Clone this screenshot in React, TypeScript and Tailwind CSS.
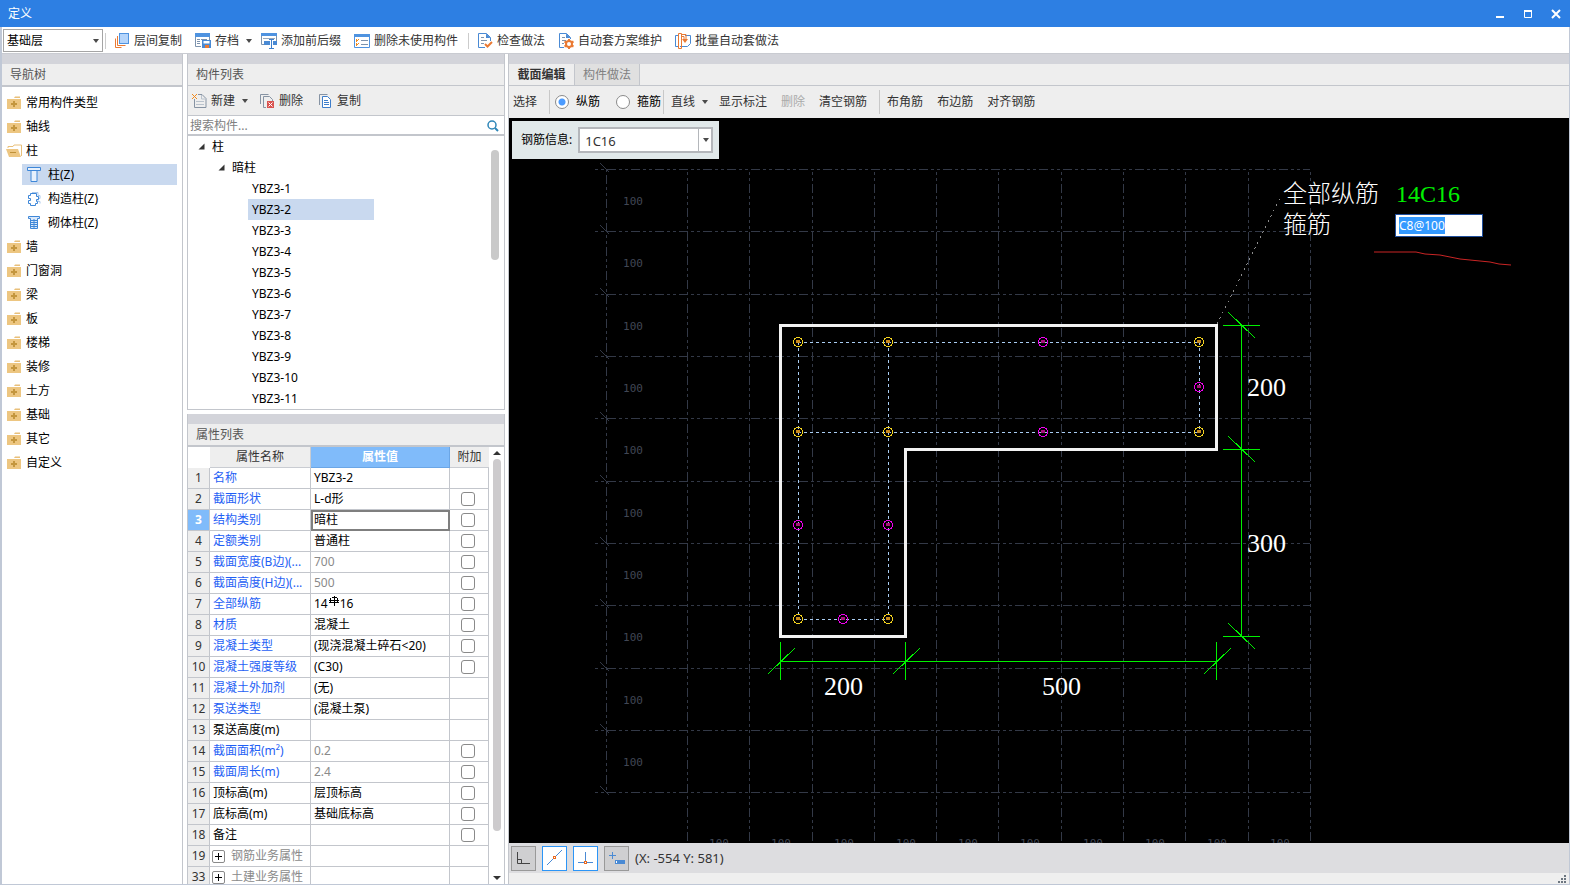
import { useEffect, useRef, useState } from "react";
import type { ReactNode } from "react";
import clsx from "clsx";

const GRID_X = [687, 749, 812, 874, 936, 998, 1061, 1123, 1185, 1248, 1310];
const GRID_Y = [169, 231, 294, 356, 418, 481, 543, 605, 668, 730, 792];

const CORNER_BARS = [
  [798, 342], [888, 342], [1199, 342],
  [798, 432], [888, 432], [1199, 432],
  [798, 619], [888, 619],
];
const SIDE_BARS = [
  [1043, 342], [1043, 432], [1199, 387],
  [798, 525], [888, 525], [843, 619],
];

interface PropertyRow {
  no: number;
  name: string;
  value?: string;
  check?: boolean;
  tone?: "blue" | "black";
  dim?: boolean;
  group?: boolean;
}

const PROPERTIES: PropertyRow[] = [
  { no: 1, name: "名称", value: "YBZ3-2", tone: "blue" },
  { no: 2, name: "截面形状", value: "L-d形", tone: "blue", check: true },
  { no: 3, name: "结构类别", value: "暗柱", tone: "blue", check: true },
  { no: 4, name: "定额类别", value: "普通柱", tone: "blue", check: true },
  { no: 5, name: "截面宽度(B边)(...", value: "700", tone: "blue", check: true, dim: true },
  { no: 6, name: "截面高度(H边)(...", value: "500", tone: "blue", check: true, dim: true },
  { no: 7, name: "全部纵筋", value: "14#16", tone: "blue", check: true },
  { no: 8, name: "材质", value: "混凝土", tone: "blue", check: true },
  { no: 9, name: "混凝土类型", value: "(现浇混凝土碎石<20)", tone: "blue", check: true },
  { no: 10, name: "混凝土强度等级", value: "(C30)", tone: "blue", check: true },
  { no: 11, name: "混凝土外加剂", value: "(无)", tone: "blue" },
  { no: 12, name: "泵送类型", value: "(混凝土泵)", tone: "blue" },
  { no: 13, name: "泵送高度(m)" },
  { no: 14, name: "截面面积(m²)", value: "0.2", tone: "blue", check: true, dim: true },
  { no: 15, name: "截面周长(m)", value: "2.4", tone: "blue", check: true, dim: true },
  { no: 16, name: "顶标高(m)", value: "层顶标高", check: true },
  { no: 17, name: "底标高(m)", value: "基础底标高", check: true },
  { no: 18, name: "备注", check: true },
  { no: 19, name: "钢筋业务属性", group: true },
  { no: 33, name: "土建业务属性", group: true },
];

const MEMBERS = Array.from({ length: 11 }, (_, i) => `YBZ3-${i + 1}`);

function Caret() {
  return (
    <svg width="6" height="4" viewBox="0 0 6 4" className="shrink-0" aria-hidden="true">
      <path d="M0 0h6L3 4z" fill="#4a4a4a" />
    </svg>
  );
}

function Icon({ children }: { children: ReactNode }) {
  return (
    <svg width="16" height="16" viewBox="0 0 16 16" fill="none" className="shrink-0" aria-hidden="true">
      {children}
    </svg>
  );
}

function LayerCopyIcon() {
  return (
    <Icon>
      <rect x="5.5" y="0.5" width="9" height="10" fill="#b5d5fb" stroke="#4f93e0" />
      <path d="M3.5 3v9.500h8M1.500 5.500v9h6" stroke="#ea7a33" />
    </Icon>
  );
}

function ArchiveIcon() {
  return (
    <Icon>
      <path d="M0 0h15v4H0z" fill="#4f93e0" />
      <path d="M0.500 4v9.500H6M14.500 4v3" stroke="#7d93ad" />
      <path d="M2 6.500h3M6 6.500h6M2 8.500h3M2 10.500h3" stroke="#7d93ad" />
      <path d="M7 7h9v8H7z" fill="#4a8ad4" />
      <path d="M8.500 8h6v2.500h-6z" fill="#fff" />
      <path d="M10 12h4v3h-4z" fill="#ea7a33" />
    </Icon>
  );
}

function AffixIcon() {
  return (
    <Icon>
      <path d="M0 0h16v3H0z" fill="#4f93e0" />
      <path d="M0.500 3v8.500h3M15.500 3v8.500h-2" stroke="#7d93ad" />
      <path d="M2 5.500h12" stroke="#9aa9ba" />
      <path d="M3 8h6v4H3zM12 8h4v4h-4z" fill="#4a8ad4" />
      <path d="M8 6.500h5M10.500 7v8M8 15.500h5" stroke="#3e7ecb" />
    </Icon>
  );
}

function UnusedIcon() {
  return (
    <Icon>
      <path d="M0 1h16v3H0z" fill="#4f93e0" />
      <path d="M0.500 4v10.500h15V4" stroke="#4f93e0" />
      <path d="M2 6h1v1h1v1H3v1H2zM4 6h1v1H4zM2 10h1v1h1v1H3v1H2zM4 10h1v1H4z" fill="#f08a1d" />
      <path d="M7 7.500h7M7 11.500h7" stroke="#7d93ad" />
    </Icon>
  );
}

function CheckDocIcon() {
  return (
    <Icon>
      <path d="M8 14.500H1.500V.5h8l4 4V8" stroke="#4a8ad4" />
      <path d="M9 .5v4.500h4.500z" fill="#4a8ad4" />
      <path d="M4 4.500h3M4 7.500h6M4 10.500h3" stroke="#7d93ad" />
      <path d="M8 11l2.500 2.500L15 9" stroke="#ea7a33" strokeWidth="2" />
    </Icon>
  );
}

function GearDocIcon() {
  return (
    <Icon>
      <path d="M6 14.500H1.500V.5h7l4 4V6" stroke="#4a8ad4" />
      <path d="M8 .5v4.500h4.500z" fill="#4a8ad4" />
      <path d="M4 4.500h3M4 7.500h4M4 10.500h2" stroke="#7d93ad" />
      <circle cx="11" cy="11" r="3" stroke="#ea7a33" strokeWidth="2" />
      <path d="M11 6v2M11 14v2M6.500 8.500l2 1M13.500 12.500l2 1M6.500 13.500l2-1M13.500 9.500l2-1" stroke="#ea7a33" strokeWidth="2" />
    </Icon>
  );
}

function BatchIcon() {
  return (
    <Icon>
      <path d="M3.500 2.500h-3v11h3M10 2.500h5.500v8l-3 3H5" stroke="#4a8ad4" />
      <path d="M3.500.5h3v15h-3zM6.500 1.500h4.500v5M6.500 3.500h2.500v3" stroke="#ea7a33" />
      <path d="M10 10L7 6h6z" fill="#ea7a33" />
    </Icon>
  );
}

function NewIcon() {
  return (
    <Icon>
      <path d="M7 1.500h4l4 4v9H3.500V6" stroke="#8693a3" />
      <path d="M10.500 2v4H15M5 8.500h8M5 11.500h8" stroke="#b9c2cc" />
      <path d="M1 1h1v1h1v1h1V2h1V1h1v1H5v1H4v1h1v1h1v1H5V5H4V4H3v1H2v1H1V5h1V4h1V3H2V2H1z" fill="#f08a1d" />
    </Icon>
  );
}

function DeleteIcon() {
  return (
    <Icon>
      <path d="M1.500 11V1.500h8M7 14.500H4.500V3.500h6l3 3V8" stroke="#8693a3" />
      <path d="M8 8h7v7H8z" fill="#d9534f" />
      <path d="M9.500 9.500l4 4M13.500 9.500l-4 4" stroke="#fff" />
    </Icon>
  );
}

function CopyIcon() {
  return (
    <Icon>
      <path d="M2.500 12V1.500h8" stroke="#8693a3" />
      <path d="M5.500 3.500h5l3 3v8h-8z" fill="#fff" stroke="#3e7ecb" />
      <path d="M7 7.500h4M7 9.500h5M7 11.500h5" stroke="#3e7ecb" />
    </Icon>
  );
}

function FolderIcon({ open = false }: { open?: boolean }) {
  return (
    <Icon>
      {open ? (
        <>
          <path d="M2 5V3.500h5l1-1.500h7.500V13" stroke="#e9c07a" />
          <path d="M0 6h12l3 8H3z" fill="#edc681" />
          <path d="M4 9.500h6" stroke="#bf9138" />
        </>
      ) : (
        <>
          <path d="M1 4h14v10H1z" fill="#edc681" />
          <path d="M8 3h6V1.500H9z" fill="#e9c07a" />
          <path d="M5 9h6M8 6v6" stroke="#c4963e" strokeWidth="2" />
        </>
      )}
    </Icon>
  );
}

function ColumnIcon({ kind }: { kind: "plain" | "tie" | "brick" }) {
  if (kind === "tie") {
    return (
      <Icon>
        <path d="M6 1.500h6v3h2v3h-2v3h2v2" stroke="#a9c8ec" />
        <path d="M4.500 2.500h6v3h2v3h-2v2h1v2h-2v2h-5v-2h-2v-3h2v-2h-2v-3h2z" fill="#fff" stroke="#3e87d8" />
      </Icon>
    );
  }
  if (kind === "brick") {
    return (
      <Icon>
        <path d="M2.500 1.500h11v2h-2v10h-7v-10h-2z" fill="#dbe9fa" stroke="#3e87d8" />
        <path d="M5 5.500h6M5 7.500h6M5 9.500h6M5 11.500h6M8 4v10" stroke="#3e87d8" />
      </Icon>
    );
  }
  return (
    <Icon>
      <path d="M1.500 .5h13v3h-3.500v11h-6v-11h-3.500z" fill="#e7f1fd" stroke="#3e87d8" />
      <path d="M4 3.500h8" stroke="#3e87d8" />
    </Icon>
  );
}

function ToolButton({ icon, label, menu }: { icon: ReactNode; label: string; menu?: boolean }) {
  return (
    <button type="button" className="flex shrink-0 items-center gap-1 whitespace-nowrap text-[#333]">
      {icon}
      {label}
      {menu && (
        <span className="ml-[3px]">
          <Caret />
        </span>
      )}
    </button>
  );
}

function TitleBar() {
  return (
    <header className="flex h-[27px] shrink-0 items-center justify-between bg-[#2d7fe3] pr-1.5 pl-2 text-white">
      <h1>定义</h1>
      <div className="flex items-center gap-3">
        <button type="button" aria-label="最小化">
          <Icon>
            <path d="M4 11h8" stroke="#fff" strokeWidth="2" />
          </Icon>
        </button>
        <button type="button" aria-label="最大化">
          <Icon>
            <path d="M4.500 5v6.500h7V5" stroke="#fff" />
            <path d="M4 5h8" stroke="#fff" strokeWidth="2" />
          </Icon>
        </button>
        <button type="button" aria-label="关闭">
          <Icon>
            <path d="M4 4l8 8M12 4l-8 8" stroke="#fff" strokeWidth="2" />
          </Icon>
        </button>
      </div>
    </header>
  );
}

function MainToolbar() {
  return (
    <div className="flex h-[27px] shrink-0 items-center border-b border-[#c9cbd1] bg-white pt-px pl-px">
      <div className="relative flex items-center">
        <select
          aria-label="楼层"
          className="h-[23px] w-[100px] appearance-none border border-[#a5a5a5] bg-white pl-[3px] text-black"
        >
          <option>基础层</option>
        </select>
        <span className="pointer-events-none absolute right-1">
          <Caret />
        </span>
      </div>
      <span className="mx-0.5 h-4 w-px bg-[#ccc]" />
      <div className="flex items-center gap-[13px] pl-1.5">
        <ToolButton icon={<LayerCopyIcon />} label="层间复制" />
        <div className="-mr-1">
          <ToolButton icon={<ArchiveIcon />} label="存档" menu />
        </div>
        <ToolButton icon={<AffixIcon />} label="添加前后缀" />
        <ToolButton icon={<UnusedIcon />} label="删除未使用构件" />
      </div>
      <span className="mr-2 ml-2.5 h-4 w-px bg-[#ccc]" />
      <div className="flex items-center gap-[13px]">
        <ToolButton icon={<CheckDocIcon />} label="检查做法" />
        <ToolButton icon={<GearDocIcon />} label="自动套方案维护" />
        <ToolButton icon={<BatchIcon />} label="批量自动套做法" />
      </div>
    </div>
  );
}

function PanelHeader({ title, thick }: { title: string; thick?: boolean }) {
  return (
    <>
      <div className="h-2.5 shrink-0 bg-[#d3d4da]" />
      <h2
        className={clsx(
          "flex shrink-0 items-center border-[#c3c6cc] bg-[#eee] pl-2 text-[#555]",
          thick ? "h-[23px] border-b-2" : "h-[22px] border-b"
        )}
      >
        {title}
      </h2>
    </>
  );
}

function NavRow({ label, open }: { label: string; open?: boolean }) {
  return (
    <button type="button" className="flex h-[21px] items-center gap-1 pl-1 text-black">
      <FolderIcon open={open} />
      {label}
    </button>
  );
}

function NavChild({ label, kind, active }: { label: string; kind: "plain" | "tie" | "brick"; active?: boolean }) {
  return (
    <button
      type="button"
      className={clsx("mr-[5px] ml-5 flex h-[21px] items-center gap-1.5 pl-1 text-black", active && "bg-[#c9d9ef]")}
    >
      <ColumnIcon kind={kind} />
      <span>{label}</span>
    </button>
  );
}

function NavTree() {
  return (
    <nav className="flex w-[181px] shrink-0 flex-col border-r border-[#c3c6cc] bg-white">
      <PanelHeader title="导航树" thick />
      <div className="flex flex-col gap-[3px] pt-[5px]">
        <NavRow label="常用构件类型" />
        <NavRow label="轴线" />
        <NavRow label="柱" open />
        <NavChild label="柱(Z)" kind="plain" active />
        <NavChild label="构造柱(Z)" kind="tie" />
        <NavChild label="砌体柱(Z)" kind="brick" />
        {["墙", "门窗洞", "梁", "板", "楼梯", "装修", "土方", "基础", "其它", "自定义"].map((label) => (
          <NavRow key={label} label={label} />
        ))}
      </div>
    </nav>
  );
}

function TreeArrow() {
  return (
    <svg width="7" height="7" viewBox="0 0 7 7" className="shrink-0" aria-hidden="true">
      <path d="M6.500 0.500v6h-6z" fill="#333" />
    </svg>
  );
}

function MemberList() {
  const [selected, setSelected] = useState("YBZ3-2");

  return (
    <section className="flex shrink-0 flex-col border-x border-b border-[#c3c6cc] bg-white">
      <PanelHeader title="构件列表" />
      <div className="flex h-[30px] items-center border-b border-[#c3c6cc] bg-[#eee] pl-[3px]">
        <ToolButton icon={<NewIcon />} label="新建" menu />
        <div className="flex gap-[14px] pl-[11px]">
          <ToolButton icon={<DeleteIcon />} label="删除" />
          <ToolButton icon={<CopyIcon />} label="复制" />
        </div>
      </div>
      <label className="flex h-5 items-center border-b-2 border-[#c3c6cc] pt-px pr-1 pl-0.5">
        <input
          type="text"
          aria-label="搜索构件"
          placeholder="搜索构件..."
          className="min-w-0 flex-1 outline-none placeholder:text-[#808080]"
        />
        <svg width="14" height="14" viewBox="0 0 14 14" fill="none" aria-hidden="true">
          <circle cx="6" cy="6" r="4" stroke="#2d86b8" strokeWidth="1.500" />
          <path d="M9 9l3 3" stroke="#2d86b8" strokeWidth="2" />
        </svg>
      </label>
      <div className="flex">
        <ul className="min-w-0 flex-1 text-black">
          <li className="flex h-[21px] items-center gap-[7px] pl-2.5">
            <TreeArrow />柱
          </li>
          <li className="flex h-[21px] items-center gap-[7px] pl-[30px]">
            <TreeArrow />暗柱
          </li>
          {MEMBERS.map((name) => (
            <li key={name} className="h-[21px] pl-[60px]">
              <button
                type="button"
                onClick={() => setSelected(name)}
                className={clsx("h-[21px] w-[126px] pl-1 text-left", selected === name && "bg-[#c9d9ef]")}
              >
                {name}
              </button>
            </li>
          ))}
        </ul>
        <div className="w-[13px] pt-[14px]">
          <div className="h-[110px] w-2 rounded-full bg-[#c9c9c9]" />
        </div>
      </div>
    </section>
  );
}

// HRB400 bar symbol, shown between the count and the diameter
function RebarSymbol() {
  return (
    <svg
      width="12"
      height="12"
      viewBox="0 0 12 12"
      fill="none"
      shapeRendering="crispEdges"
      className="-mt-1.5 inline-block"
      aria-label="C"
    >
      <path d="M3.500 2.500h5M3.500 7.500h5M2.500 3v5M9.500 3v5M6.500 1v10M1 5.500h10M1 7.500h10" stroke="#000" />
    </svg>
  );
}

function PropertyValue({ value }: { value?: string }) {
  if (!value || !value.includes("#")) return <>{value}</>;
  const [count, size] = value.split("#");
  return (
    <span className="flex items-center">
      {count}
      <RebarSymbol />
      {size}
    </span>
  );
}

function PropertyPanel() {
  return (
    <section className="mt-1 flex min-h-0 flex-1 flex-col border-x border-[#c3c6cc] bg-white">
      <PanelHeader title="属性列表" thick />
      <div className="flex min-h-0 flex-1 overflow-hidden">
        <div className="min-w-0 flex-1 overflow-hidden">
          <table className="w-full table-fixed border-separate border-spacing-0 leading-4">
            <colgroup>
              <col className="w-[22px]" />
              <col className="w-[101px]" />
              <col />
              <col className="w-[39px]" />
            </colgroup>
            <thead>
              <tr className="h-[21px] text-[#333]">
                <th className="p-0" />
                <th className="border-r border-b border-[#c9ccd2] bg-[#eee] p-0 font-normal">属性名称</th>
                <th className="border-r border-b border-[#6ba6e6] bg-[#80bbfa] p-0 font-bold text-white">属性值</th>
                <th className="border-b border-[#c9ccd2] bg-[#eee] p-0 font-normal">附加</th>
              </tr>
            </thead>
            <tbody>
              {PROPERTIES.map((row) => {
                const current = row.no === 3;
                return (
                  <tr key={row.no} className="h-[21px]">
                    <td
                      className={clsx(
                        "border-r border-b border-[#c3c6cc] p-0 text-center",
                        current ? "bg-[#80bbfa] font-bold text-white" : "bg-[#eee] text-[#333]"
                      )}
                    >
                      {row.no}
                    </td>
                    <td
                      className={clsx(
                        "border-r border-b border-[#c3c6cc] py-0 pr-0 whitespace-nowrap",
                        row.group ? "pl-0.5 text-[#8a8a8a]" : "pl-[3px]",
                        !row.group && (row.tone === "blue" ? "text-[#1f5ff5]" : "text-black")
                      )}
                    >
                      {row.group ? (
                        <span className="flex items-center gap-1.5">
                          <button
                            type="button"
                            aria-label={`展开${row.name}`}
                            className="grid size-[13px] place-items-center rounded-xs border border-[#8a8a8a] bg-white"
                          >
                            <svg width="7" height="7" viewBox="0 0 7 7" aria-hidden="true">
                              <path d="M3.500 0v7M0 3.500h7" stroke="#000" />
                            </svg>
                          </button>
                          {row.name}
                        </span>
                      ) : (
                        row.name
                      )}
                    </td>
                    <td
                      className={clsx(
                        "border-r border-b border-[#c3c6cc] py-0 pr-0 pl-[3px] whitespace-nowrap",
                        row.dim ? "text-[#8a8a8a]" : "text-black",
                        current && "outline-2 -outline-offset-2 outline-[#7f7f7f]"
                      )}
                    >
                      <PropertyValue value={row.value} />
                    </td>
                    <td className="border-r border-b border-[#c3c6cc] p-0">
                      {row.check && (
                        <input
                          type="checkbox"
                          aria-label={`附加 ${row.name}`}
                          className="ml-[11px] block size-[14px] appearance-none rounded-[3px] border border-[#8a8a8a] bg-white checked:bg-[#80bbfa]"
                        />
                      )}
                    </td>
                  </tr>
                );
              })}
            </tbody>
          </table>
        </div>
        <div className="flex w-[15px] shrink-0 flex-col items-center gap-1 pt-1 pb-1">
          <svg width="8" height="4" viewBox="0 0 8 4" aria-hidden="true">
            <path d="M0 4h8L4 0z" fill="#333" />
          </svg>
          <div className="flex min-h-0 w-2 flex-1 flex-col">
            <div className="h-[90%] rounded-full bg-[#cdcbcd]" />
          </div>
          <svg width="8" height="4" viewBox="0 0 8 4" aria-hidden="true">
            <path d="M0 0h8L4 4z" fill="#333" />
          </svg>
        </div>
      </div>
    </section>
  );
}

function EditorToolbar() {
  const [mode, setMode] = useState("long");

  const radio = (value: string, label: string) => (
    <label className="flex items-center gap-[7px] text-black">
      <input
        type="radio"
        name="bar-mode"
        checked={mode === value}
        onChange={() => setMode(value)}
        className="size-[14px] appearance-none rounded-full border border-[#8a8a8a] bg-white checked:bg-[radial-gradient(circle,#4b9bff_3px,#fff_4px)]"
      />
      {label}
    </label>
  );

  return (
    <div className="flex h-8 shrink-0 items-center bg-[#eee] pl-1 whitespace-nowrap text-[#333]">
      <button type="button">选择</button>
      <span className="mr-[5px] ml-3 h-6 w-px bg-[#c8c8c8]" />
      <div className="flex gap-4">
        {radio("long", "纵筋")}
        {radio("hoop", "箍筋")}
      </div>
      <span className="mr-[7px] ml-0.5 h-6 w-px bg-[#c8c8c8]" />
      <button type="button" className="flex items-center gap-[7px]">
        直线
        <Caret />
      </button>
      <div className="flex gap-[14px] pl-[11px]">
        <button type="button">显示标注</button>
        <button type="button" disabled className="text-[#aaa]">
          删除
        </button>
        <button type="button">清空钢筋</button>
      </div>
      <span className="mr-[7px] ml-3 h-6 w-px bg-[#c8c8c8]" />
      <div className="flex gap-[14px]">
        <button type="button">布角筋</button>
        <button type="button">布边筋</button>
        <button type="button">对齐钢筋</button>
      </div>
    </div>
  );
}

function SectionDrawing() {
  return (
    <svg
      width="1060"
      height="725"
      viewBox="509 118 1060 725"
      fill="none"
      shapeRendering="crispEdges"
      className="absolute top-0 left-0"
      role="img"
      aria-label="L形暗柱截面"
    >
      <g stroke="#333947" strokeDasharray="3 3 3 3 9 3">
        {GRID_Y.map((y) => (
          <path key={y} d={`M595 ${y + 0.5}H1310`} />
        ))}
        {GRID_X.map((x) => (
          <path key={x} d={`M${x + 0.5} 172V843`} />
        ))}
        <path d="M606.500 169V793" strokeDasharray="3 3 9 3 3 3" />
      </g>
      <g stroke="#333947">
        {GRID_Y.map((y) => (
          <path key={y} d={`M600 ${y - 6}l9 9`} />
        ))}
      </g>
      <g fill="#414755" textAnchor="middle" className="font-['DejaVu_Sans_Mono',monospace] text-[11px] font-extralight">
        {GRID_Y.slice(0, 10).map((y) => (
          <text key={y} x="633" y={y + 36}>
            100
          </text>
        ))}
        {GRID_X.slice(0, 10).map((x) => (
          <text key={x} x={x + 32} y="847">
            100
          </text>
        ))}
      </g>

      <path d="M780.500 325.500H1216.500V449.500H905.500V636.500H780.500Z" stroke="#f2f2f2" strokeWidth="3" />
      <g stroke="#a9cdf3" strokeDasharray="3 3">
        <path d="M798 342.500H1199M798 432.500H1199M798 619.500H888" />
        <path d="M798.500 342V619M888.500 342V619M1199.500 342V432" />
      </g>
      {CORNER_BARS.map(([x, y]) => (
        <g key={`${x}-${y}`}>
          <circle cx={x} cy={y} r="4.500" stroke="#f3d21f" />
          <rect x={x - 2} y={y - 2} width="4" height="3" fill="#c98a1c" />
        </g>
      ))}
      {SIDE_BARS.map(([x, y]) => (
        <g key={`${x}-${y}`}>
          <circle cx={x} cy={y} r="4.500" stroke="#f000f0" />
          <rect x={x - 2} y={y - 2} width="4" height="3" fill="#a8107c" />
        </g>
      ))}

      <g stroke="#00f000">
        <path d="M1241.500 325V637M780 661.500H1217" />
        {[325, 449, 636].map((y) => (
          <path key={y} d={`M1223 ${y + 0.5}h37M1228 ${y - 13}l27 26`} />
        ))}
        {[780, 905, 1216].map((x) => (
          <path key={x} d={`M${x + 0.5} 642v38M${x - 12} 674l27 -26`} />
        ))}
      </g>
      <g fill="#fff" className="font-['Liberation_Serif',serif] text-[26px]">
        <text x="1247" y="396">200</text>
        <text x="1247" y="552">300</text>
        <text x="824" y="695">200</text>
        <text x="1042" y="695">500</text>
      </g>

      <path d="M1217 324L1281 196" stroke="#8c8c8c" strokeDasharray="2 4" />
      <g fill="#fff" className="font-['Noto_Sans_CJK_SC',sans-serif] text-[24px] font-light">
        <text x="1283" y="202">全部纵筋</text>
        <text x="1283" y="233">箍筋</text>
      </g>
      <text x="1396" y="202" fill="#00f000" className="font-['Liberation_Serif',serif] text-[24px]">
        14C16
      </text>
      <path
        d="M1374 252h42l9 2 15 1 20 4 30 3 9 2 12 1"
        stroke="#c92525"
        shapeRendering="auto"
      />
    </svg>
  );
}

function SectionCanvas() {
  const stirrupRef = useRef<HTMLInputElement>(null);

  useEffect(() => {
    stirrupRef.current?.focus();
    stirrupRef.current?.select();
  }, []);

  return (
    <div className="relative min-h-0 flex-1 overflow-hidden bg-black">
      <SectionDrawing />
      <div className="absolute top-[3px] left-[3px] flex h-[38px] w-[207px] items-center gap-1.5 bg-[#e1e9ea] pl-[9px] text-black">
        <label htmlFor="bar-info" className="whitespace-nowrap">钢筋信息:</label>
        <div className="relative flex items-center">
          <select
            id="bar-info"
            className="h-[26px] w-[135px] appearance-none border-2 border-[#b4b7bb] bg-white pt-px pl-[5px] text-[13px] text-[#333]"
          >
            <option>1C16</option>
          </select>
          <span className="pointer-events-none absolute right-0 flex h-[22px] w-[15px] items-center justify-center border-l border-[#b4b7bb]">
            <Caret />
          </span>
        </div>
      </div>
      <input
        ref={stirrupRef}
        aria-label="箍筋"
        defaultValue="C8@100"
        className="absolute top-24 left-[886px] h-[23px] w-[88px] border border-[#1f4e9c] bg-white px-[3px] text-[#333] outline-none selection:bg-[#3399ff] selection:text-white"
      />
    </div>
  );
}

function StatusBar() {
  const button = "grid size-[25px] place-items-center border";

  return (
    <footer className="shrink-0">
      <div className="flex h-[30px] items-center gap-1.5 bg-[#dddde0] pl-0.5 text-[#333]">
        <button type="button" aria-label="正交" className={clsx(button, "border-[#999] bg-[#cfcfd1]")}>
          <Icon>
            <path d="M1.500 2v11.500H14M1.500 9.500h4v4" stroke="#444" />
          </Icon>
        </button>
        <button type="button" aria-label="中点" className={clsx(button, "border-[#2b95f7] bg-white")}>
          <Icon>
            <path d="M0 15L15 0" stroke="#4a8ad4" />
            <rect x="6.500" y="6.500" width="2" height="2" fill="#fff" stroke="#ea6a20" />
          </Icon>
        </button>
        <button type="button" aria-label="垂点" className={clsx(button, "border-[#2b95f7] bg-white")}>
          <Icon>
            <path d="M7.500 2v11M0 12.500h15" stroke="#4a8ad4" />
            <rect x="6.500" y="11.500" width="2" height="2" fill="#fff" stroke="#ea6a20" />
          </Icon>
        </button>
        <button type="button" aria-label="动态输入" className={clsx(button, "border-[#999] bg-[#cfcfd1]")}>
          <Icon>
            <path d="M0 5.500h7M3.500 2v7" stroke="#4a8ad4" />
            <path d="M6 10h10v4H6z" fill="#4a8ad4" />
            <path d="M7 11h1v2H7z" fill="#fff" />
          </Icon>
        </button>
        <output className="text-[13px]">(X: -554 Y: 581)</output>
      </div>
      <div className="flex h-[11px] items-center justify-end bg-[#efefef] pr-[3px]">
        <svg width="8" height="8" viewBox="0 0 8 8" fill="#6c7680" aria-hidden="true">
          <path d="M6 0h2v2H6zM3 3h2v2H3zM6 3h2v2H6zM0 6h2v2H0zM3 6h2v2H3zM6 6h2v2H6z" />
        </svg>
      </div>
    </footer>
  );
}

function SectionEditor() {
  return (
    <main className="flex min-w-0 flex-1 flex-col border-l border-[#c3c6cc]">
      <div className="h-2.5 shrink-0 bg-[#d3d4da]" />
      <div role="tablist" className="flex h-[22px] shrink-0 border-b border-[#c3c6cc] bg-[#eee]">
        <button type="button" role="tab" aria-selected="true" className="w-[65px] font-bold text-[#333]">
          截面编辑
        </button>
        <button
          type="button"
          role="tab"
          aria-selected="false"
          className="w-[66px] border-x border-[#c3c6cc] bg-[#e0e0e0] text-[#808080]"
        >
          构件做法
        </button>
      </div>
      <EditorToolbar />
      <SectionCanvas />
      <StatusBar />
    </main>
  );
}

export default function App() {
  return (
    <div className="flex h-screen flex-col overflow-hidden bg-white font-['Noto_Sans','Noto_Sans_CJK_SC',sans-serif] text-[12px] leading-4">
      <TitleBar />
      <div className="flex min-h-0 flex-1 flex-col border-r border-b border-l-2 border-[#c0c8d6]">
        <MainToolbar />
        <div className="flex min-h-0 flex-1">
          <NavTree />
          <div className="mr-[3px] ml-1 flex w-[318px] shrink-0 flex-col">
            <MemberList />
            <PropertyPanel />
          </div>
          <SectionEditor />
        </div>
      </div>
    </div>
  );
}
